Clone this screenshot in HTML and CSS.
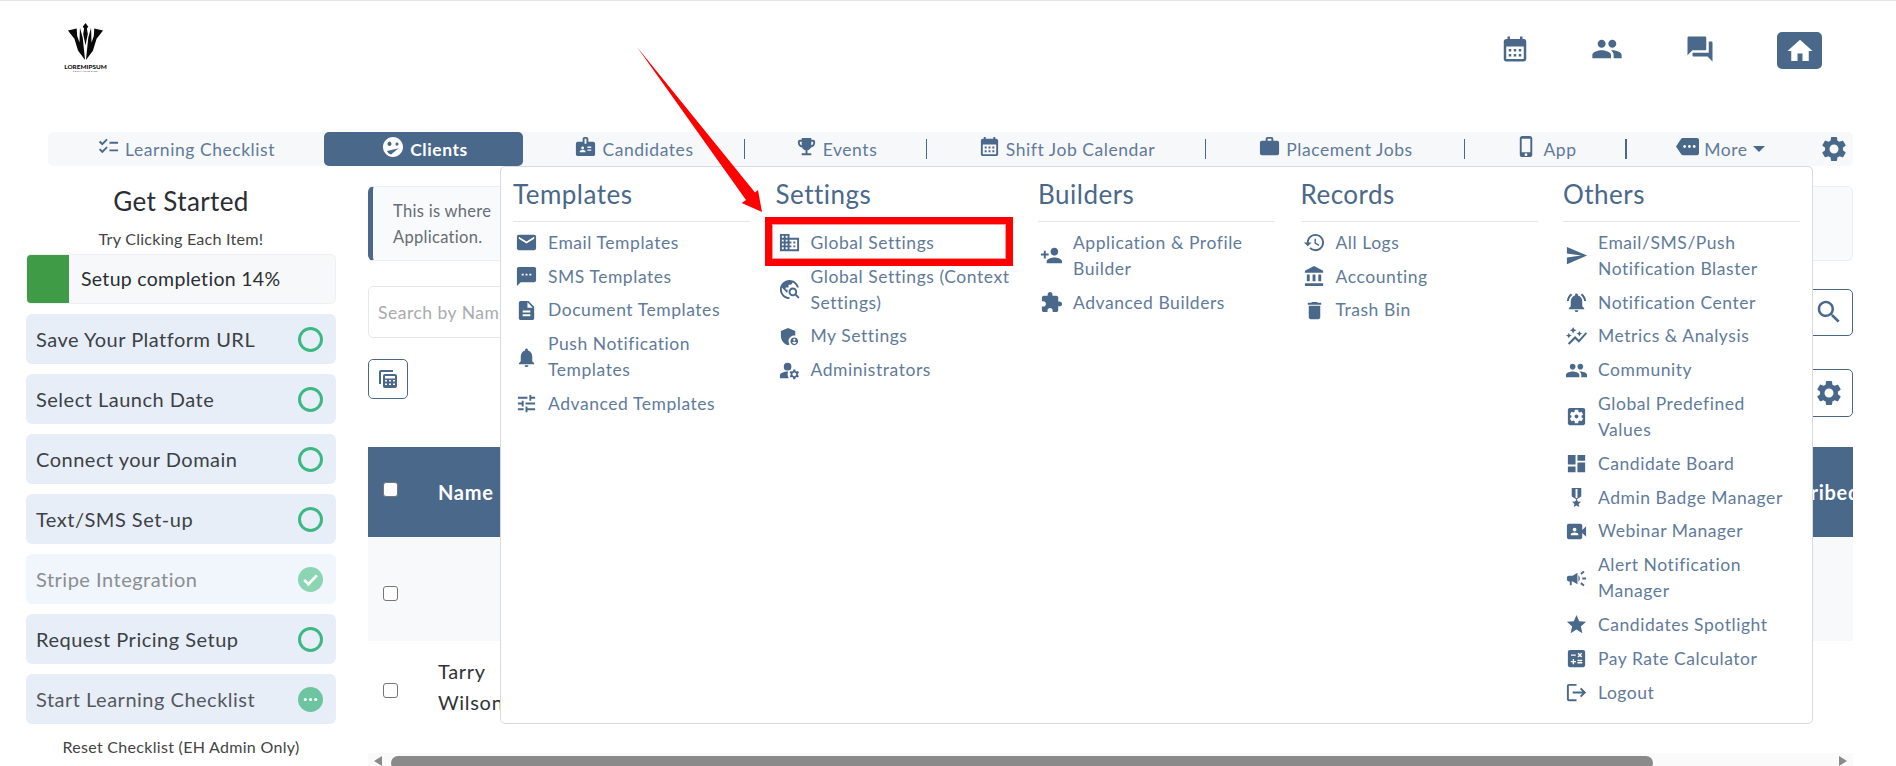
FILE: index.html
```html
<!DOCTYPE html>
<html lang="en">
<head>
<meta charset="utf-8">
<title>Clients</title>
<link rel="stylesheet" href="styles.css">
</head>
<body>
<svg class="defs" width="0" height="0" aria-hidden="true">
<defs>
<symbol id="i-cal" viewBox="0 0 24 24"><path d="M19 4h-1V2h-2v2H8V2H6v2H5c-1.1 0-2 .9-2 2v14c0 1.1.9 2 2 2h14c1.1 0 2-.9 2-2V6c0-1.1-.9-2-2-2zm0 16H5V10h14v10zM9 14H7v-2h2v2zm4 0h-2v-2h2v2zm4 0h-2v-2h2v2zm-8 4H7v-2h2v2zm4 0h-2v-2h2v2zm4 0h-2v-2h2v2z"/></symbol>
<symbol id="i-people" viewBox="0 0 24 24"><path d="M16 11c1.66 0 2.99-1.34 2.99-3S17.66 5 16 5c-1.66 0-3 1.34-3 3s1.34 3 3 3zm-8 0c1.66 0 2.99-1.34 2.99-3S9.66 5 8 5C6.34 5 5 6.34 5 8s1.34 3 3 3zm0 2c-2.33 0-7 1.17-7 3.5V19h14v-2.5c0-2.33-4.67-3.5-7-3.5zm8 0c-.29 0-.62.02-.97.05 1.16.84 1.97 1.97 1.97 3.45V19h6v-2.5c0-2.33-4.67-3.5-7-3.5z"/></symbol>
<symbol id="i-forum" viewBox="0 0 24 24"><path d="M21 6h-2v9H6v2c0 .55.45 1 1 1h11l4 4V7c0-.55-.45-1-1-1zm-4 6V3c0-.55-.45-1-1-1H3c-.55 0-1 .45-1 1v14l4-4h10c.55 0 1-.45 1-1z"/></symbol>
<symbol id="i-home" viewBox="0 0 24 24"><path d="M10 20v-6h4v6h5v-8h3L12 3 2 12h3v8z"/></symbol>
<symbol id="i-check" viewBox="0 0 24 24"><path d="M22 7h-9v2h9V7zm0 8h-9v2h9v-2zM5.54 11 2 7.46l1.41-1.41 2.12 2.12 4.24-4.24 1.41 1.41L5.54 11zm0 8L2 15.46l1.41-1.41 2.12 2.12 4.24-4.24 1.41 1.41L5.54 19z"/></symbol>
<symbol id="i-mood" viewBox="0 0 24 24"><path d="M12 2C6.48 2 2 6.48 2 12s4.48 10 10 10 10-4.48 10-10S17.52 2 12 2zM8.5 6.500c1.100 0 2 1 2 2.300s-.9 2.300-2 2.300-2-1-2-2.300.9-2.300 2-2.300zm7.500 1c.83 0 1.500.7 1.500 1.600s-.67 1.600-1.500 1.600-1.500-.7-1.500-1.600.67-1.600 1.500-1.600zM10 19.500c-1.800-.5-3.300-1.800-4-3.500l11.800-2.800-1.800 1.300-6 5z"/></symbol>
<symbol id="i-badge" viewBox="0 0 24 24"><path d="M20 7h-5V4c0-1.100-.9-2-2-2h-2c-1.100 0-2 .9-2 2v3H4c-1.100 0-2 .9-2 2v11c0 1.100.9 2 2 2h16c1.100 0 2-.9 2-2V9c0-1.100-.9-2-2-2zM9 12c.83 0 1.500.67 1.500 1.500S9.830 15 9 15s-1.500-.67-1.500-1.500S8.170 12 9 12zm3 6H6v-.75c0-1 2-1.500 3-1.500s3 .5 3 1.500V18zm1-9h-2V4h2v5zm5 7.500h-4V15h4v1.500zm0-3h-4V12h4v1.500z"/></symbol>
<symbol id="i-trophy" viewBox="0 0 24 24"><path d="M19 5h-2V3H7v2H5c-1.100 0-2 .9-2 2v1c0 2.550 1.920 4.630 4.390 4.940.63 1.500 1.980 2.630 3.610 2.960V19H7v2h10v-2h-4v-3.100c1.630-.33 2.980-1.460 3.610-2.960C19.080 12.630 21 10.550 21 8V7c0-1.100-.9-2-2-2zM5 8V7h2v3.820C5.840 10.400 5 9.300 5 8zm14 0c0 1.300-.84 2.400-2 2.820V7h2v1z"/></symbol>
<symbol id="i-work" viewBox="0 0 24 24"><path d="M20 6h-4V4c0-1.110-.89-2-2-2h-4c-1.110 0-2 .89-2 2v2H4c-1.110 0-1.990.89-1.990 2L2 19c0 1.110.89 2 2 2h16c1.110 0 2-.89 2-2V8c0-1.110-.89-2-2-2zm-6 0h-4V4h4v2z"/></symbol>
<symbol id="i-phone" viewBox="0 0 24 24"><path d="M15.500 1h-8C6.120 1 5 2.120 5 3.500v17C5 21.880 6.120 23 7.500 23h8c1.380 0 2.500-1.120 2.500-2.500v-17C18 2.120 16.880 1 15.500 1zm-4 21c-.83 0-1.500-.67-1.500-1.500s.67-1.500 1.500-1.500 1.500.67 1.500 1.500-.67 1.500-1.500 1.500zm4.500-4H7V4h9v14z"/></symbol>
<symbol id="i-more" viewBox="0 0 24 24"><path d="M22 3H7c-.69 0-1.230.35-1.590.88L0 12l5.410 8.110c.36.53.9.89 1.590.89h15c1.100 0 2-.9 2-2V5c0-1.100-.9-2-2-2zM9 13.500c-.83 0-1.500-.67-1.500-1.500s.67-1.500 1.500-1.500 1.500.67 1.500 1.500-.67 1.500-1.500 1.500zm5 0c-.83 0-1.500-.67-1.500-1.500s.67-1.500 1.500-1.500 1.500.67 1.500 1.500-.67 1.500-1.500 1.500zm5 0c-.83 0-1.500-.67-1.500-1.500s.67-1.500 1.500-1.500 1.500.67 1.500 1.500-.67 1.500-1.500 1.500z"/></symbol>
<symbol id="i-gear" viewBox="0 0 24 24"><path d="M19.140 12.940c.04-.3.06-.61.06-.94 0-.32-.02-.64-.07-.94l2.030-1.580c.18-.14.23-.41.12-.61l-1.920-3.320c-.12-.22-.37-.29-.59-.22l-2.390.96c-.5-.38-1.030-.7-1.620-.94l-.36-2.540c-.04-.24-.24-.41-.48-.41h-3.840c-.24 0-.43.17-.47.41l-.36 2.540c-.59.24-1.130.57-1.620.94l-2.390-.96c-.22-.08-.47 0-.59.22L2.740 8.870c-.12.21-.08.47.12.61l2.030 1.580c-.05.3-.09.63-.09.94s.02.64.07.94l-2.030 1.580c-.18.14-.23.41-.12.61l1.920 3.320c.12.22.37.29.59.22l2.390-.96c.5.38 1.030.7 1.620.94l.36 2.540c.05.24.24.41.48.41h3.840c.24 0 .44-.17.47-.41l.36-2.540c.59-.24 1.130-.56 1.620-.94l2.390.96c.22.08.47 0 .59-.22l1.920-3.320c.12-.22.07-.47-.12-.61l-2.010-1.580zM12 15.600c-1.980 0-3.600-1.620-3.600-3.600s1.620-3.600 3.600-3.600 3.600 1.620 3.600 3.600-1.620 3.600-3.600 3.600z"/></symbol>
<symbol id="i-email" viewBox="0 0 24 24"><path d="M20 4H4c-1.100 0-1.990.9-1.990 2L2 18c0 1.100.9 2 2 2h16c1.100 0 2-.9 2-2V6c0-1.100-.9-2-2-2zm0 4l-8 5-8-5V6l8 5 8-5v2z"/></symbol>
<symbol id="i-sms" viewBox="0 0 24 24"><path d="M20 2H4c-1.100 0-1.990.9-1.990 2L2 22l4-4h14c1.100 0 2-.9 2-2V4c0-1.100-.9-2-2-2zM9 11H7V9h2v2zm4 0h-2V9h2v2zm4 0h-2V9h2v2z"/></symbol>
<symbol id="i-doc" viewBox="0 0 24 24"><path d="M14 2H6c-1.100 0-1.990.9-1.990 2L4 20c0 1.100.89 2 1.990 2H18c1.100 0 2-.9 2-2V8l-6-6zm2 16H8v-2h8v2zm0-4H8v-2h8v2zm-3-5V3.500L18.500 9H13z"/></symbol>
<symbol id="i-bell" viewBox="0 0 24 24"><path d="M12 22c1.100 0 2-.9 2-2h-4c0 1.100.89 2 2 2zm6-6v-5c0-3.070-1.640-5.640-4.500-6.320V4c0-.83-.67-1.500-1.500-1.500s-1.500.67-1.500 1.500v.68C7.630 5.360 6 7.920 6 11v5l-2 2v1h16v-1l-2-2z"/></symbol>
<symbol id="i-tune" viewBox="0 0 24 24"><path d="M3 17v2h6v-2H3zM3 5v2h10V5H3zm10 16v-2h8v-2h-8v-2h-2v6h2zM7 9v2H3v2h4v2h2V9H7zm14 4v-2H11v2h10zm-6-4h2V7h4V5h-4V3h-2v6z"/></symbol>
<symbol id="i-domain" viewBox="0 0 24 24"><path d="M12 7V3H2v18h20V7H12zM6 19H4v-2h2v2zm0-4H4v-2h2v2zm0-4H4V9h2v2zm0-4H4V5h2v2zm4 12H8v-2h2v2zm0-4H8v-2h2v2zm0-4H8V9h2v2zm0-4H8V5h2v2zm10 12h-8v-2h2v-2h-2v-2h2v-2h-2V9h8v10zm-2-8h-2v2h2v-2zm0 4h-2v2h2v-2z"/></symbol>
<symbol id="i-travel" viewBox="0 0 24 24"><path d="M19.300 16.900c.4-.7.7-1.500.7-2.400 0-2.500-2-4.500-4.500-4.500S11 12 11 14.500s2 4.500 4.500 4.500c.9 0 1.700-.3 2.400-.7l3.200 3.200 1.400-1.400-3.200-3.200zm-3.800.1c-1.400 0-2.500-1.100-2.500-2.500s1.100-2.500 2.500-2.500 2.500 1.100 2.500 2.500-1.100 2.500-2.500 2.500zM12 20v2C6.480 22 2 17.520 2 12S6.480 2 12 2c4.840 0 8.870 3.440 9.800 8h-2.070c-.64-2.460-2.400-4.470-4.730-5.410V5c0 1.100-.9 2-2 2h-2v2c0 .55-.45 1-1 1H8v2h2v3H9l-4.790-4.790C4.080 10.790 4 11.380 4 12c0 4.410 3.590 8 8 8z"/></symbol>
<symbol id="i-shield" viewBox="0 0 24 24"><path d="M17 11c.34 0 .67.04 1 .09V6.270L10.500 3 3 6.270v4.910c0 4.540 3.200 8.790 7.500 9.820.55-.13 1.080-.32 1.600-.55-.69-.98-1.100-2.170-1.100-3.450 0-3.310 2.690-6 6-6z"/><path d="M17 13c-2.210 0-4 1.790-4 4s1.790 4 4 4 4-1.790 4-4-1.790-4-4-4zm0 1.380c.62 0 1.120.51 1.120 1.120s-.51 1.120-1.120 1.120-1.120-.51-1.120-1.120.5-1.120 1.120-1.120zm0 5.370c-.93 0-1.740-.46-2.240-1.170.05-.72 1.510-1.080 2.240-1.080s2.190.36 2.240 1.080c-.5.71-1.310 1.170-2.240 1.170z"/></symbol>
<symbol id="i-admin" viewBox="0 0 24 24"><circle cx="10" cy="8" r="4"/><path d="M10.670 13.020c-.22-.01-.44-.02-.67-.02-2.420 0-4.680.67-6.610 1.820-.88.52-1.390 1.500-1.390 2.530V20h9.260c-.79-1.130-1.260-2.510-1.260-4 0-1.070.25-2.070.67-2.980z"/><path d="M20.750 16c0-.22-.03-.42-.06-.63l1.140-1.010-1-1.730-1.450.49c-.32-.27-.68-.48-1.080-.63L18 11h-2l-.3 1.490c-.4.15-.76.36-1.080.63l-1.450-.49-1 1.730 1.140 1.010c-.03.21-.06.41-.06.63s.03.42.06.63l-1.140 1.010 1 1.730 1.450-.49c.32.27.68.48 1.080.63L16 21h2l.3-1.490c.4-.15.76-.36 1.080-.63l1.450.49 1-1.730-1.140-1.010c.03-.21.06-.41.06-.63zM17 18c-1.100 0-2-.9-2-2s.9-2 2-2 2 .9 2 2-.9 2-2 2z"/></symbol>
<symbol id="i-padd" viewBox="0 0 24 24"><path d="M15 12c2.210 0 4-1.790 4-4s-1.790-4-4-4-4 1.790-4 4 1.790 4 4 4zm-9-2V7H4v3H1v2h3v3h2v-3h3v-2H6zm9 4c-2.670 0-8 1.340-8 4v2h16v-2c0-2.660-5.330-4-8-4z"/></symbol>
<symbol id="i-ext" viewBox="0 0 24 24"><path d="M20.500 11H19V7c0-1.100-.9-2-2-2h-4V3.500C13 2.120 11.880 1 10.500 1S8 2.120 8 3.500V5H4c-1.100 0-1.990.9-1.990 2v3.800H3.500c1.490 0 2.700 1.210 2.700 2.700s-1.210 2.700-2.700 2.700H2V20c0 1.100.9 2 2 2h3.800v-1.500c0-1.490 1.210-2.700 2.700-2.700 1.490 0 2.700 1.210 2.700 2.700V22H17c1.100 0 2-.9 2-2v-4h1.500c1.380 0 2.500-1.120 2.500-2.500S21.880 11 20.500 11z"/></symbol>
<symbol id="i-hist" viewBox="0 0 24 24"><path d="M13 3c-4.970 0-9 4.030-9 9H1l3.890 3.890.07.14L9 12H6c0-3.870 3.130-7 7-7s7 3.130 7 7-3.130 7-7 7c-1.930 0-3.680-.79-4.940-2.060l-1.420 1.420C8.270 19.990 10.510 21 13 21c4.970 0 9-4.030 9-9s-4.030-9-9-9zm-1 5v5l4.280 2.540.72-1.210-3.500-2.080V8H12z"/></symbol>
<symbol id="i-bank" viewBox="0 0 24 24"><path d="M4 10v7h3v-7H4zm6 0v7h3v-7h-3zM2 22h19v-3H2v3zm14-12v7h3v-7h-3zm-4.500-9L2 6v2h19V6l-9.500-5z"/></symbol>
<symbol id="i-trash" viewBox="0 0 24 24"><path d="M6 19c0 1.100.9 2 2 2h8c1.100 0 2-.9 2-2V7H6v12zM19 4h-3.500l-1-1h-5l-1 1H5v2h14V4z"/></symbol>
<symbol id="i-send" viewBox="0 0 24 24"><path d="M2.010 21L23 12 2.010 3 2 10l15 2-15 2z"/></symbol>
<symbol id="i-bella" viewBox="0 0 24 24"><path d="M7.580 4.080L6.150 2.650C3.750 4.480 2.170 7.300 2.030 10.500h2c.15-2.650 1.510-4.970 3.550-6.420zm12.390 6.420h2c-.15-3.200-1.730-6.020-4.120-7.850l-1.420 1.430c2.020 1.450 3.390 3.770 3.540 6.420zM18 11c0-3.070-1.640-5.640-4.500-6.320V4c0-.83-.67-1.500-1.500-1.500s-1.500.67-1.500 1.500v.68C7.630 5.360 6 7.920 6 11v5l-2 2v1h16v-1l-2-2v-5zm-6 11c.14 0 .27-.01.4-.04.65-.14 1.180-.58 1.440-1.180.1-.24.15-.5.15-.78h-4c.01 1.100.9 2 2.010 2z"/></symbol>
<symbol id="i-graph" viewBox="0 0 24 24"><path d="M14.060 9.940L12 9l2.060-.94L15 6l.94 2.060L18 9l-2.060.94L15 12l-.94-2.060zM4 14l.94-2.060L7 11l-2.060-.94L4 8l-.94 2.060L1 11l2.060.94L4 14zm4.500-5l1.090-2.410L12 5.500 9.590 4.410 8.500 2 7.410 4.410 5 5.500l2.410 1.090L8.500 9zm-4 11.500l6-6.010 4 4L23 8.930l-1.410-1.410-7.090 7.970-4-4L3 19l1.500 1.500z"/></symbol>
<symbol id="i-setapp" viewBox="0 0 24 24"><path d="M12 10c-1.100 0-2 .9-2 2s.9 2 2 2 2-.9 2-2-.9-2-2-2zm7-7H5c-1.110 0-2 .9-2 2v14c0 1.100.89 2 2 2h14c1.110 0 2-.9 2-2V5c0-1.100-.89-2-2-2zm-1.750 9c0 .23-.02.46-.05.68l1.480 1.160c.13.11.17.3.08.45l-1.400 2.420c-.09.15-.27.21-.43.15l-1.740-.7c-.36.28-.76.51-1.180.69l-.26 1.850c-.03.17-.18.3-.35.3h-2.800c-.17 0-.32-.13-.35-.29l-.26-1.850c-.43-.18-.82-.41-1.180-.69l-1.740.7c-.16.06-.34 0-.43-.15l-1.400-2.420c-.09-.15-.05-.34.08-.45l1.480-1.160c-.03-.23-.05-.46-.05-.69 0-.23.02-.46.05-.68l-1.480-1.160c-.13-.11-.17-.3-.08-.45l1.400-2.420c.09-.15.27-.21.43-.15l1.740.7c.36-.28.76-.51 1.180-.69l.26-1.850c.03-.17.18-.3.35-.3h2.800c.17 0 .32.13.35.29l.26 1.850c.43.18.82.41 1.180.69l1.740-.7c.16-.06.34 0 .43.15l1.400 2.420c.09.15.05.34-.08.45l-1.480 1.160c.03.23.05.46.05.69z"/></symbol>
<symbol id="i-dash" viewBox="0 0 24 24"><path d="M3 13h8V3H3v10zm0 8h8v-6H3v6zm10 0h8V11h-8v10zm0-18v6h8V3h-8z"/></symbol>
<symbol id="i-medal" viewBox="0 0 24 24"><path d="M17 10.430V2H7v8.430c0 .35.18.68.49.86l4.180 2.510-.99 2.340-3.410.29 2.590 2.240L9.070 22 12 20.230 14.930 22l-.78-3.330 2.590-2.240-3.410-.29-.99-2.340 4.180-2.510c.3-.18.48-.5.48-.86zm-4 1.800l-1 .6-1-.6V3h2v9.230z"/></symbol>
<symbol id="i-video" viewBox="0 0 24 24"><path d="M18 10.480V6c0-1.100-.9-2-2-2H4c-1.100 0-2 .9-2 2v12c0 1.100.9 2 2 2h12c1.100 0 2-.9 2-2v-4.480l4 3.980v-11l-4 3.980zM10 8c1.100 0 2 .9 2 2s-.9 2-2 2-2-.9-2-2 .9-2 2-2zm4 8H6v-.57c0-.81.48-1.530 1.220-1.850.85-.37 1.790-.58 2.780-.58.99 0 1.930.21 2.780.58.74.32 1.220 1.040 1.220 1.850V16z"/></symbol>
<symbol id="i-camp" viewBox="0 0 24 24"><path d="M18 11v2h4v-2h-4zm-2 6.610c.96.71 2.210 1.650 3.200 2.390.4-.53.8-1.070 1.200-1.600-.99-.74-2.240-1.680-3.200-2.400-.4.54-.8 1.080-1.200 1.610zM20.400 5.600c-.4-.53-.8-1.070-1.200-1.600-.99.74-2.240 1.680-3.200 2.400.4.53.8 1.070 1.200 1.600.96-.72 2.210-1.650 3.200-2.400zM4 9c-1.100 0-2 .9-2 2v2c0 1.100.9 2 2 2h1v4h2v-4h1l5 3V6L8 9H4zm11.500 3c0-1.330-.58-2.530-1.500-3.350v6.690c.92-.81 1.500-2.010 1.500-3.340z"/></symbol>
<symbol id="i-star" viewBox="0 0 24 24"><path d="M12 17.270L18.180 21l-1.640-7.030L22 9.240l-7.190-.61L12 2 9.190 8.630 2 9.240l5.460 4.730L5.820 21z"/></symbol>
<symbol id="i-calc" viewBox="0 0 24 24"><path d="M19 3H5c-1.100 0-2 .9-2 2v14c0 1.100.9 2 2 2h14c1.100 0 2-.9 2-2V5c0-1.100-.9-2-2-2zm-5.970 4.060L14.090 6l1.410 1.410L16.910 6l1.060 1.060-1.410 1.410 1.410 1.410-1.060 1.060-1.410-1.400-1.410 1.410-1.060-1.060 1.410-1.410-1.410-1.420zm-6.780.66h5v1.500h-5v-1.500zM11.500 16h-2v2H8v-2H6v-1.500h2v-2h1.500v2h2V16zm6.500 1.250h-5v-1.500h5v1.500zm0-2.500h-5v-1.500h5v1.500z"/></symbol>
<symbol id="i-logout" viewBox="0 0 24 24"><path d="M17 7l-1.410 1.410L18.170 11H8v2h10.170l-2.580 2.580L17 17l5-5zM4 5h8V3H4c-1.100 0-2 .9-2 2v14c0 1.100.9 2 2 2h8v-2H4V5z"/></symbol>
<symbol id="i-search" viewBox="0 0 24 24"><path d="M15.500 14h-.79l-.28-.27C15.410 12.590 16 11.110 16 9.500 16 5.910 13.090 3 9.500 3S3 5.910 3 9.500 5.910 16 9.500 16c1.610 0 3.090-.59 4.230-1.570l.27.28v.79l5 4.990L20.490 19l-4.990-5zm-6 0C7.010 14 5 11.990 5 9.500S7.010 5 9.500 5 14 7.010 14 9.500 11.990 14 9.500 14z"/></symbol>
<symbol id="i-stack" viewBox="0 0 24 24"><path d="M3 5c0-1.100.9-2 2-2h12v2H5v12H3V5z"/><path d="M9 7h10c1.100 0 2 .9 2 2v10c0 1.100-.9 2-2 2H9c-1.100 0-2-.9-2-2V9c0-1.100.9-2 2-2zm0 2v2.500h10V9H9zm0 4v1.500h2V13H9zm4 0v1.500h2V13h-2zm4 0v1.500h2V13h-2zM9 16.500V18h2v-1.500H9zm4 0V18h2v-1.500h-2zm4 0V18h2v-1.500h-2z" fill-rule="evenodd"/></symbol>
</defs>
</svg>

<header class="top">
  <div class="logo">
    <svg class="logo-mark" viewBox="0 0 40 40">
      <path d="M20 0l3 4-1.500 2 1 6-2.500 12-2.500-12 1-6L17 4z"/>
      <path d="M1 8l9.500-2 .5 8 2.500 7L14 5l3 11 2.500 24L12 30 8 17z"/>
      <path d="M39 8l-9.500-2-.5 8-2.500 7L26 5l-3 11-2.500 24L28 30l4-13z"/>
    </svg>
    <span class="logo-name">LOREMIPSUM</span>
    <span class="logo-sub">TECHNOLOGIES</span>
  </div>
  <nav class="quick">
    <a class="quick-link"><svg class="ic-cal"><use href="#i-cal"/></svg></a>
    <a class="quick-link"><svg class="ic-ppl"><use href="#i-people"/></svg></a>
    <a class="quick-link"><svg class="ic-forum"><use href="#i-forum"/></svg></a>
    <a class="quick-home"><svg class="ic-home"><use href="#i-home"/></svg></a>
  </nav>
</header>

<nav class="tabs">
  <a class="tab"><svg><use href="#i-check"/></svg><span>Learning Checklist</span></a>
  <a class="tab active"><svg><use href="#i-mood"/></svg><span>Clients</span></a>
  <a class="tab sep"><svg><use href="#i-badge"/></svg><span>Candidates</span></a>
  <a class="tab sep"><svg><use href="#i-trophy"/></svg><span>Events</span></a>
  <a class="tab sep"><svg><use href="#i-cal"/></svg><span>Shift Job Calendar</span></a>
  <a class="tab sep"><svg><use href="#i-work"/></svg><span>Placement Jobs</span></a>
  <a class="tab sep dark"><svg><use href="#i-phone"/></svg><span>App</span></a>
  <a class="tab tab-more"><svg><use href="#i-more"/></svg><span>More</span><i class="caret"></i></a>
  <a class="tab gear"><svg><use href="#i-gear"/></svg></a>
</nav>

<main class="page">
  <aside class="setup">
    <h2 class="setup-title">Get Started</h2>
    <p class="setup-sub">Try Clicking Each Item!</p>
    <div class="progress"><div class="progress-fill"></div><span>Setup completion 14%</span></div>
    <ul class="steps">
      <li class="step">Save Your Platform URL<i class="ring"></i></li>
      <li class="step">Select Launch Date<i class="ring"></i></li>
      <li class="step">Connect your Domain<i class="ring"></i></li>
      <li class="step">Text/SMS Set-up<i class="ring"></i></li>
      <li class="step done">Stripe Integration<svg class="state" viewBox="0 0 24 24"><circle cx="12" cy="12" r="12" fill="#8bd4b4"/><path d="M6 12.500l4 4 8-8.500" fill="none" stroke="#fff" stroke-width="2.600"/></svg></li>
      <li class="step">Request Pricing Setup<i class="ring"></i></li>
      <li class="step going">Start Learning Checklist<svg class="state" viewBox="0 0 24 24"><circle cx="12" cy="12" r="12" fill="#6cc5a0"/><circle cx="7" cy="12" r="1.500" fill="#fff"/><circle cx="12" cy="12" r="1.500" fill="#fff"/><circle cx="17" cy="12" r="1.500" fill="#fff"/></svg></li>
    </ul>
    <p class="reset">Reset Checklist (EH Admin Only)</p>
  </aside>

  <section class="content">
    <div class="notice">This is where<br>Application.</div>
    <div class="search-row">
      <div class="search-input">Search by Name</div>
      <button class="btn"><svg class="ic-search"><use href="#i-search"/></svg></button>
    </div>
    <div class="tool-row">
      <button class="btn btn-tool"><svg class="ic-stack"><use href="#i-stack"/></svg></button>
      <button class="btn btn-gear"><svg class="ic-bgear"><use href="#i-gear"/></svg></button>
    </div>
    <div class="table-wrap">
      <div class="table">
        <div class="row head"><i class="box box-head"></i><span class="cell-name">Name</span><span class="cell-end">Subscribed</span></div>
        <div class="row odd"><i class="box"></i></div>
        <div class="row even"><i class="box"></i><span class="cell-name">Tarry<br>Wilson</span></div>
      </div>
    </div>
    <div class="scroll">
      <i class="arrow-l"></i>
      <div class="thumb"></div>
      <i class="arrow-r"></i>
    </div>
  </section>
</main>

<div class="menu">
  <div class="menu-col">
    <h3>Templates</h3>
    <a class="mi"><svg><use href="#i-email"/></svg><span>Email Templates</span></a>
    <a class="mi"><svg><use href="#i-sms"/></svg><span>SMS Templates</span></a>
    <a class="mi"><svg><use href="#i-doc"/></svg><span>Document Templates</span></a>
    <a class="mi"><svg><use href="#i-bell"/></svg><span>Push Notification Templates</span></a>
    <a class="mi"><svg><use href="#i-tune"/></svg><span>Advanced Templates</span></a>
  </div>
  <div class="menu-col">
    <h3>Settings</h3>
    <a class="mi"><svg><use href="#i-domain"/></svg><span>Global Settings</span></a>
    <a class="mi"><svg><use href="#i-travel"/></svg><span>Global Settings (Context Settings)</span></a>
    <a class="mi"><svg><use href="#i-shield"/></svg><span>My Settings</span></a>
    <a class="mi"><svg><use href="#i-admin"/></svg><span>Administrators</span></a>
  </div>
  <div class="menu-col">
    <h3>Builders</h3>
    <a class="mi"><svg><use href="#i-padd"/></svg><span>Application &amp; Profile Builder</span></a>
    <a class="mi"><svg><use href="#i-ext"/></svg><span>Advanced Builders</span></a>
  </div>
  <div class="menu-col">
    <h3>Records</h3>
    <a class="mi"><svg><use href="#i-hist"/></svg><span>All Logs</span></a>
    <a class="mi"><svg><use href="#i-bank"/></svg><span>Accounting</span></a>
    <a class="mi"><svg><use href="#i-trash"/></svg><span>Trash Bin</span></a>
  </div>
  <div class="menu-col">
    <h3>Others</h3>
    <a class="mi"><svg><use href="#i-send"/></svg><span>Email/SMS/Push<br>Notification Blaster</span></a>
    <a class="mi"><svg><use href="#i-bella"/></svg><span>Notification Center</span></a>
    <a class="mi"><svg><use href="#i-graph"/></svg><span>Metrics &amp; Analysis</span></a>
    <a class="mi"><svg><use href="#i-people"/></svg><span>Community</span></a>
    <a class="mi"><svg><use href="#i-setapp"/></svg><span>Global Predefined<br>Values</span></a>
    <a class="mi"><svg><use href="#i-dash"/></svg><span>Candidate Board</span></a>
    <a class="mi"><svg><use href="#i-medal"/></svg><span>Admin Badge Manager</span></a>
    <a class="mi"><svg><use href="#i-video"/></svg><span>Webinar Manager</span></a>
    <a class="mi"><svg><use href="#i-camp"/></svg><span>Alert Notification<br>Manager</span></a>
    <a class="mi"><svg><use href="#i-star"/></svg><span>Candidates Spotlight</span></a>
    <a class="mi"><svg><use href="#i-calc"/></svg><span>Pay Rate Calculator</span></a>
    <a class="mi"><svg><use href="#i-logout"/></svg><span>Logout</span></a>
  </div>
</div>

<div class="callout-box"></div>
<svg class="callout-arrow" viewBox="0 0 1896 766"><path d="M637 47L746 200 741.700 203 762 212 758 190 755 192.500z"/></svg>
</body>
</html>
```
FILE: styles.css
```css
* { box-sizing: border-box; }
html, body { margin: 0; padding: 0; }
body {
  position: relative;
  width: 1896px;
  height: 766px;
  overflow: hidden;
  background: #fff;
  border-top: 1px solid #e8e2ef;
  font-family: Lato, "Open Sans", sans-serif;
  color: #33383d;
}
.defs { position: absolute; }
svg { fill: #4a6889; display: block; }
h2, h3, p, ul { margin: 0; padding: 0; }
ul { list-style: none; }
button { padding: 0; background: #fff; font: inherit; }

/* top */
.top {
  display: flex;
  justify-content: space-between;
  height: 131px;
  padding: 22px 74px 0 64px;
}
.logo { display: flex; flex-direction: column; align-items: center; width: 43px; height: 50px; }
.logo-mark { width: 39px; height: 40px; fill: #0a0a0a; }
.logo-name { margin-top: 3px; font-size: 6.400px; line-height: 7px; font-weight: 900; color: #111; white-space: nowrap; }
.logo-sub { font-size: 2.500px; line-height: 3px; color: #333; white-space: nowrap; letter-spacing: .5px; }
.quick { display: flex; align-items: flex-start; }
.quick-link { display: block; }
.ic-cal { width: 30px; height: 30px; margin: 11px 61px 0 0; }
.ic-ppl { width: 32px; height: 32px; margin: 10px 62px 0 0; }
.ic-forum { width: 30px; height: 30px; margin: 11px 62px 0 0; }
.quick-home {
  display: flex; align-items: center; justify-content: center;
  width: 45px; height: 37px; margin-top: 9px;
  background: #4a6889; border-radius: 5px;
}
.ic-home { width: 30px; height: 30px; fill: #fff; }

/* tabs */
.tabs {
  display: grid;
  grid-template-columns: 276px 199px 222px 182px 279px 259px 162px 183px 43px;
  width: 1805px;
  height: 34px;
  margin-left: 48px;
  background: #f7f8fa;
  border-radius: 5px;
}
.tab {
  position: relative;
  display: flex; align-items: center; justify-content: center;
  gap: 5px;
  font-size: 17.500px;
  color: #5f7b9a;
  letter-spacing: .55px;
  white-space: nowrap;
}
.tab svg { width: 23px; height: 23px; margin-top: -6px; }
.tab span { padding-top: 1px; }
.tab.active { background: #4a6889; color: #fff; border-radius: 5px; font-weight: 700; gap: 5px; padding-left: 2px; }
.tab.active svg { width: 24px; height: 24px; fill: #fff; margin-top: -4px; }
.tab.sep::after {
  content: ""; position: absolute; right: 0; top: 7px;
  width: 1px; height: 20px; background: #4a6889;
}
.tab.dark::after { width: 2px; }
.tab-more { padding-left: 4px; }
.caret { width: 0; height: 0; border: 6px solid transparent; border-top-color: #4a6889; border-bottom: 0; margin-left: 0; }
.gear { justify-content: flex-start; padding-left: 9px; }
.tab.gear svg { width: 30px; height: 30px; margin-top: 0; }

/* page */
.page {
  display: grid;
  grid-template-columns: 310px 1485px;
  column-gap: 32px;
  padding: 20px 0 0 26px;
}
.setup { display: flex; flex-direction: column; align-items: stretch; }
.setup-title { height: 30px; font-size: 26px; line-height: 30px; font-weight: 400; text-align: center; color: #2a2e33; letter-spacing: .4px; }
.setup-sub { margin-top: 11px; height: 27px; font-size: 16.200px; line-height: 24px; text-align: center; color: #444; letter-spacing: .2px; }
.progress {
  display: flex; align-items: center;
  height: 50px;
  padding-bottom: 1px;
  background: #f7f8fa;
  border: 1px solid #eef0f3;
  border-radius: 5px;
  overflow: hidden;
  font-size: 19.500px;
  color: #2b2f33;
  letter-spacing: .3px;
}
.progress-fill { flex: none; width: 43px; height: 50px; margin: 0 12px 0 -1px; background: #3f9b45; }
.steps { display: flex; flex-direction: column; gap: 10px; margin-top: 10px; }
.step {
  display: flex; align-items: center; justify-content: space-between;
  height: 50px;
  padding: 0 13px 0 10px;
  background: #e8eef8;
  border-radius: 6px;
  font-size: 20px;
  color: #3c4146;
  letter-spacing: .5px;
  line-height: 48px;
}
.step.done { background: #f1f5fc; color: #8a8e92; }
.step.going { color: #55595e; }
.ring { width: 25px; height: 25px; border: 3px solid #3cb883; border-radius: 50%; }
.state { width: 25px; height: 25px; }
.reset { margin-top: 12px; font-size: 16px; line-height: 22px; text-align: center; color: #444; letter-spacing: .3px; }

.content { display: flex; flex-direction: column; min-width: 0; }
.notice {
  height: 75px;
  padding: 11px 0 0 20px;
  background: #f9fafb;
  border: 1px solid #eceef1;
  border-left: 5px solid #4a6889;
  border-radius: 6px;
  font-size: 16.500px;
  line-height: 26px;
  color: #666d74;
  letter-spacing: .3px;
}
.search-row { display: flex; align-items: center; justify-content: space-between; height: 52px; margin-top: 25px; }
.search-input {
  flex: 1; height: 52px; padding: 15px 0 0 9px;
  border: 1px solid #e6e8eb; border-radius: 5px;
  font-size: 17.500px; color: #a8abae; letter-spacing: .5px;
}
.btn { display: flex; align-items: center; justify-content: center; width: 48px; border: 1px solid #4a6889; border-radius: 5px; }
.search-row .btn { height: 47px; margin-left: -1px; }
.ic-search { width: 30px; height: 30px; }
.tool-row { display: flex; align-items: flex-start; justify-content: space-between; height: 58px; margin-top: 21px; }
.btn-tool { width: 40px; height: 40px; }
.ic-stack { width: 24px; height: 24px; }
.btn-gear { height: 48px; margin-top: 10px; }
.ic-bgear { width: 30px; height: 30px; }

.table-wrap { margin-top: 30px; overflow: hidden; }
.table { width: 1492px; }
.row { display: flex; align-items: center; padding-left: 15px; font-size: 20px; color: #2f3338; letter-spacing: .7px; }
.head { height: 90px; padding-bottom: 1px; background: #4a6889; color: #fff; font-weight: 700; }
.odd { height: 104px; padding-top: 8px; background: #f8f9fb; }
.even { height: 112px; padding-bottom: 13px; background: #fff; line-height: 31px; }
.even .cell-name { margin-top: -7px; }
.box { flex: none; width: 15px; height: 15px; border: 1px solid #767676; border-radius: 3px; background: #fff; }
.box-head { margin-top: -5px; }
.cell-name { margin-left: 40px; }
.cell-end { margin-left: auto; }
.scroll { position: relative; height: 13px; margin-top: 0; background: #fafafa; }
.thumb { position: absolute; left: 23px; top: 3px; width: 1262px; height: 14px; background: #8a8a8a; border-radius: 7px; }
.arrow-l, .arrow-r { position: absolute; top: 3px; width: 0; height: 0; border-style: solid; border-width: 5px 0; border-color: transparent; }
.arrow-l { left: 6px; border-right: 8px solid #8a8a8a; }
.arrow-r { right: 6px; border-left: 8px solid #8a8a8a; }

/* dropdown */
.menu {
  position: absolute;
  left: 500px; top: 165px;
  display: grid;
  grid-template-columns: repeat(5, 237px);
  column-gap: 25.500px;
  width: 1313px; height: 558px;
  padding: 0 12px;
  background: #fff;
  border: 1px solid #d8dbdf;
  border-radius: 5px;
}
.menu-col { display: flex; flex-direction: column; gap: 7.800px; }
.menu-col h3 {
  height: 55px;
  padding-top: 10px;
  border-bottom: 1px solid #e3e5e8;
  font-size: 26px; line-height: 35px; font-weight: 400;
  color: #4a6889;
  letter-spacing: .5px;
}
.mi {
  display: flex; align-items: center;
  gap: 10px;
  padding-left: 2px;
  font-size: 17.500px; line-height: 26px;
  color: #5f7b9a;
  letter-spacing: .55px;
}
.mi svg { flex: none; width: 23px; height: 23px; }
.callout-box {
  position: absolute;
  left: 765px; top: 216px;
  width: 248px; height: 49px;
  border: 7px solid #f00;
  box-shadow: inset 0 0 0 1px #ff9a9a;
}
.callout-arrow { position: absolute; left: 0; top: -1px; width: 1896px; height: 766px; fill: #f00; pointer-events: none; }
```
